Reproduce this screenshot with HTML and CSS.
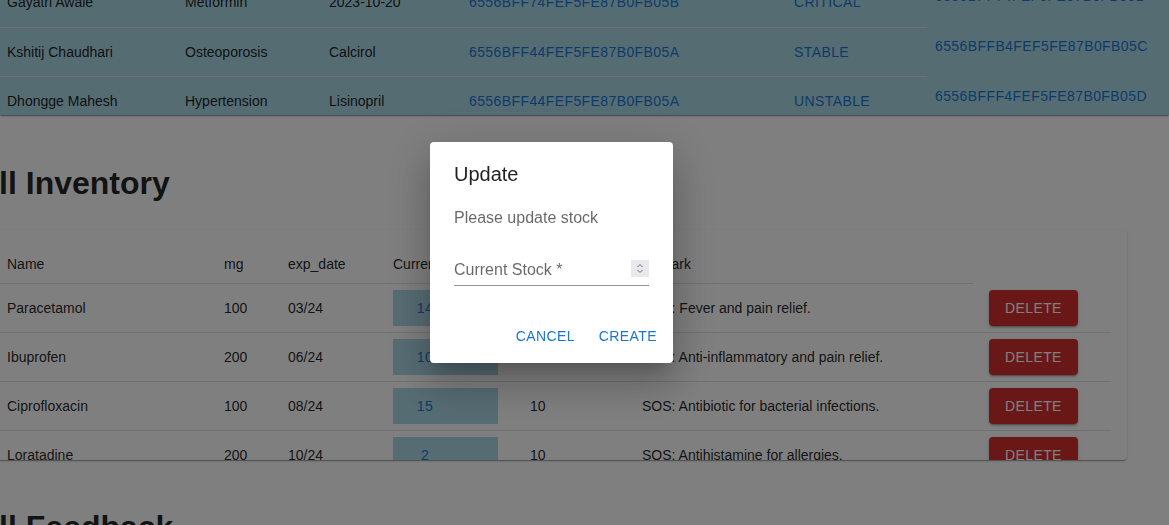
FILE: index.html
```html
<!DOCTYPE html>
<html lang="en">
<head>
<meta charset="utf-8">
<title>Inventory</title>
<link rel="stylesheet" href="styles.css">
</head>
<body>
<div class="page">
  <section class="patients">
    <div class="patients-inner">
      <table class="ptable">
        <colgroup>
          <col class="pc-name"><col class="pc-disease"><col class="pc-med"><col class="pc-id"><col class="pc-status">
        </colgroup>
        <tbody>
          <tr><td>Gayatri Awale</td><td>Metformin</td><td>2023-10-20</td><td class="blue">6556BFF74FEF5FE87B0FB05B</td><td class="blue">CRITICAL</td></tr>
          <tr><td>Kshitij Chaudhari</td><td>Osteoporosis</td><td>Calcirol</td><td class="blue">6556BFF44FEF5FE87B0FB05A</td><td class="blue">STABLE</td></tr>
          <tr><td>Dhongge Mahesh</td><td>Hypertension</td><td>Lisinopril</td><td class="blue">6556BFF44FEF5FE87B0FB05A</td><td class="blue">UNSTABLE</td></tr>
        </tbody>
      </table>
      <ul class="side-ids">
        <li>6556BFF74FEF5FE87B0FB05B</li>
        <li>6556BFFB4FEF5FE87B0FB05C</li>
        <li>6556BFFF4FEF5FE87B0FB05D</li>
      </ul>
    </div>
  </section>

  <h1 class="section-title">All Inventory</h1>

  <div class="card">
    <table class="itable">
      <colgroup>
        <col class="ic-name"><col class="ic-mg"><col class="ic-exp"><col class="ic-stock"><col class="ic-min"><col class="ic-remark"><col class="ic-action">
      </colgroup>
      <thead>
        <tr><th>Name</th><th>mg</th><th>exp_date</th><th>Current Stock</th><th>Min Stock</th><th>Remark</th><th class="no-border"></th></tr>
      </thead>
      <tbody>
        <tr><td>Paracetamol</td><td>100</td><td>03/24</td><td><div class="stock"><span class="stock-btn">14</span></div></td><td>10</td><td>SOS: Fever and pain relief.</td><td><button class="delete">Delete</button></td></tr>
        <tr><td>Ibuprofen</td><td>200</td><td>06/24</td><td><div class="stock"><span class="stock-btn">10</span></div></td><td>10</td><td>SOS: Anti-inflammatory and pain relief.</td><td><button class="delete">Delete</button></td></tr>
        <tr><td>Ciprofloxacin</td><td>100</td><td>08/24</td><td><div class="stock"><span class="stock-btn">15</span></div></td><td>10</td><td>SOS: Antibiotic for bacterial infections.</td><td><button class="delete">Delete</button></td></tr>
        <tr><td>Loratadine</td><td>200</td><td>10/24</td><td><div class="stock"><span class="stock-btn">2</span></div></td><td>10</td><td>SOS: Antihistamine for allergies.</td><td><button class="delete">Delete</button></td></tr>
      </tbody>
    </table>
  </div>

  <h1 class="section-title">All Feedback</h1>
</div>

<div class="backdrop">
  <div class="dialog">
    <h2 class="dialog-title">Update</h2>
    <div class="dialog-content">
      <p class="dialog-text">Please update stock</p>
      <div class="field">
        <span class="field-label">Current Stock *</span>
        <span class="spinner">
          <svg width="18" height="17" viewBox="0 0 18 17" aria-hidden="true">
            <polyline points="6.5,7 9,4.5 11.5,7" fill="none" stroke="#6f6f6f" stroke-width="1"/>
            <polyline points="6.5,10 9,12.5 11.5,10" fill="none" stroke="#6f6f6f" stroke-width="1"/>
          </svg>
        </span>
      </div>
    </div>
    <div class="dialog-actions">
      <button class="text-btn">Cancel</button>
      <button class="text-btn">Create</button>
    </div>
  </div>
</div>
</body>
</html>
```

FILE: styles.css
```css
* { box-sizing: border-box; }

html, body {
  margin: 0;
  padding: 0;
  background: #ffffff;
  overflow: hidden;
  font-family: "Liberation Sans", Arial, sans-serif;
  color: rgba(0, 0, 0, 0.87);
}

.page {
  width: 1169px;
}

/* ---------- patients strip ---------- */
.patients {
  height: 115px;
  background: #add8e6;
  overflow: hidden;
  box-shadow: 0 2px 1px -1px rgba(0,0,0,0.2), 0 1px 1px 0 rgba(0,0,0,0.14), 0 1px 3px 0 rgba(0,0,0,0.12);
  position: relative;
  z-index: 1;
}

.patients-inner {
  display: flex;
  align-items: flex-start;
  margin-top: -22px;
}

.ptable {
  margin-left: -9px;
  width: 936px;
  table-layout: fixed;
  border-collapse: collapse;
  flex: none;
}

.pc-name { width: 178px; }
.pc-disease { width: 144px; }
.pc-med { width: 140px; }
.pc-id { width: 325px; }
.pc-status { width: 149px; }

.ptable td {
  height: 49px;
  padding: 0 16px;
  font-size: 14px;
  line-height: 20px;
  border-bottom: 1px solid #e0e0e0;
  white-space: nowrap;
  vertical-align: middle;
}

.blue {
  color: #1976d2;
  letter-spacing: 0.4px;
  text-transform: uppercase;
}

.side-ids {
  list-style: none;
  margin: -7px 0 0 8px;
  padding: 0;
  color: #1976d2;
  font-size: 14px;
  letter-spacing: 0.4px;
}

.side-ids li {
  line-height: 50px;
  height: 50px;
  white-space: nowrap;
}

/* ---------- section headings ---------- */
.section-title {
  font-size: 32px;
  font-weight: bold;
  line-height: 37px;
  margin: 50px 0 28px -24px;
  white-space: nowrap;
}

.card + .section-title {
  margin-top: 49px;
}

/* ---------- inventory card ---------- */
.card {
  margin-left: -9px;
  width: 1136px;
  height: 230px;
  overflow: hidden;
  background: #ffffff;
  border-radius: 4px;
  box-shadow: 0 2px 1px -1px rgba(0,0,0,0.2), 0 1px 1px 0 rgba(0,0,0,0.14), 0 1px 3px 0 rgba(0,0,0,0.12);
}

.itable {
  width: 1120px;
  table-layout: fixed;
  border-collapse: collapse;
}

.ic-name { width: 217px; }
.ic-mg { width: 64px; }
.ic-exp { width: 105px; }
.ic-stock { width: 137px; }
.ic-min { width: 112px; }
.ic-remark { width: 347px; }
.ic-action { width: 138px; }

.itable th {
  text-align: left;
  font-weight: normal;
  font-size: 14px;
  line-height: 20px;
  padding: 24px 16px 9px;
  border-bottom: 1px solid #e0e0e0;
  white-space: nowrap;
}

.itable th.no-border {
  border-bottom: none;
}

.itable td {
  height: 49px;
  padding: 0 16px;
  font-size: 14px;
  line-height: 20px;
  border-bottom: 1px solid #e0e0e0;
  white-space: nowrap;
  vertical-align: middle;
}

.stock {
  width: 105px;
  height: 36px;
  background: #add8e6;
  display: flex;
  align-items: center;
}

.stock-btn {
  min-width: 64px;
  padding: 6px 8px;
  text-align: center;
  color: #1976d2;
  font-size: 14px;
  line-height: 24px;
  letter-spacing: 0.4px;
}

.delete {
  font-family: inherit;
  font-size: 14px;
  line-height: 24.5px;
  letter-spacing: 0.4px;
  text-transform: uppercase;
  color: #ffffff;
  background: #d32f2f;
  border: none;
  border-radius: 4px;
  padding: 6px 16px;
  min-width: 64px;
  box-shadow: 0 3px 1px -2px rgba(0,0,0,0.2), 0 2px 2px 0 rgba(0,0,0,0.14), 0 1px 5px 0 rgba(0,0,0,0.12);
}

/* ---------- modal ---------- */
.backdrop {
  position: fixed;
  inset: 0;
  background: rgba(0, 0, 0, 0.5);
  z-index: 10;
}

.dialog {
  position: absolute;
  left: 430px;
  top: 142px;
  width: 243px;
  background: #ffffff;
  border-radius: 4px;
  box-shadow: 0 11px 15px -7px rgba(0,0,0,0.2), 0 24px 38px 3px rgba(0,0,0,0.14), 0 9px 46px 8px rgba(0,0,0,0.12);
}

.dialog-title {
  margin: 0;
  padding: 16px 24px;
  font-size: 20px;
  font-weight: 500;
  line-height: 32px;
  color: rgba(0, 0, 0, 0.87);
}

.dialog-content {
  padding: 0 24px 20px;
}

.dialog-text {
  margin: 0;
  font-size: 16px;
  line-height: 24px;
  color: rgba(0, 0, 0, 0.6);
}

.field {
  margin: 8px 0 4px;
  height: 48px;
  padding-top: 20px;
  border-bottom: 1px solid rgba(0, 0, 0, 0.42);
  display: flex;
  align-items: flex-start;
  justify-content: space-between;
}

.field-label {
  font-size: 16px;
  line-height: 23px;
  color: rgba(0, 0, 0, 0.6);
  white-space: nowrap;
}

.spinner {
  width: 18px;
  height: 17px;
  margin-top: 2px;
  background: #e9e9ed;
  display: flex;
}

.dialog-actions {
  display: flex;
  justify-content: flex-end;
  gap: 8px;
  padding: 8px;
}

.text-btn {
  font-family: inherit;
  font-size: 14px;
  line-height: 24.5px;
  letter-spacing: 0.4px;
  text-transform: uppercase;
  color: #1976d2;
  background: transparent;
  border: none;
  padding: 6px 8px;
  min-width: 64px;
  border-radius: 4px;
}
```
